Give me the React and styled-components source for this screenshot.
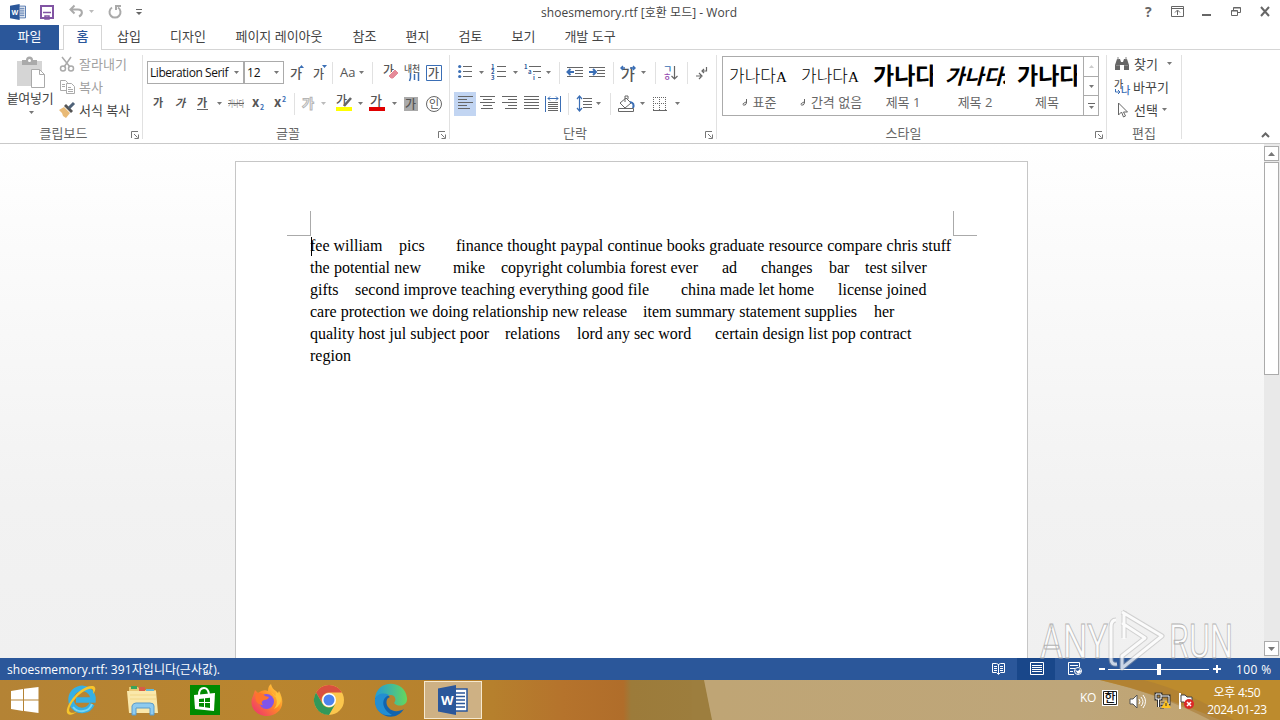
import React from "react";
import styled, { createGlobalStyle } from "styled-components";

const Global = createGlobalStyle`
  * { box-sizing: border-box; }
  html, body { margin: 0; padding: 0; }
  body { width: 1280px; height: 720px; overflow: hidden; background: #fff;
    font-family: "Open Sans", "Noto Sans CJK KR", sans-serif; font-size: 13px; color: #444; }
  svg { display: block; flex: none; overflow: visible; }
`;
const ui = '"Open Sans", "Noto Sans CJK KR", sans-serif';

const Screen = styled.div`width: 1280px; height: 720px; display: flex; flex-direction: column; position: relative; overflow: hidden;`;

/* title bar */
const TitleBar = styled.header`height: 25px; flex: none; display: grid; grid-template-columns: 541px 196px 1fr; align-items: center; background: #fff;`;
const QuickAccess = styled.div`display: flex; align-items: center; padding: 0 0 2px 9px; height: 23px;`;
const Title = styled.div`font-size: 12px; letter-spacing: .03px; white-space: nowrap; color: #444; height: 25px; line-height: 25px;`;
const WindowButtons = styled.div`display: flex; align-items: center; justify-content: flex-end; padding: 0 1px 2px 0; height: 23px;`;
const Slot = styled.div`width: ${p => p.$w}px; height: ${p => p.$h || 24}px; margin-left: ${p => p.$ml || 0}px; flex: none; display: flex; align-items: center; justify-content: center; background: ${p => p.$on ? "#c2d5f2" : "transparent"};`;

/* tabs */
const Tabs = styled.nav`height: 25px; flex: none; display: flex; border-bottom: 1px solid #d5d5d5;`;
const FileTab = styled.div`width: 59px; height: 25px; background: #2b579a; color: #fff; text-align: center; line-height: 23px; margin-right: 4px;`;
const Tab = styled.div`width: ${p => p.$w}px; text-align: center; line-height: 23px; height: 25px; white-space: nowrap; color: ${p => p.$active ? "#2b579a" : "#444"};
  ${p => p.$active && "border: 1px solid #d5d5d5; border-bottom: 0; background: #fff; line-height: 21px; font-weight: 500;"}`;

/* ribbon */
const Ribbon = styled.section`height: 94px; flex: none; display: flex; border-bottom: 1px solid #c9c9c9; background: #fff; position: relative;`;
const Group = styled.div`width: ${p => p.$w}px; height: 93px; flex: none; display: flex; flex-direction: column; position: relative;
  &::after { content: ""; position: absolute; right: 0; top: 5px; width: 1px; height: 84px; background: #e1e1e1; }`;
const GroupBody = styled.div`height: 75px; flex: none; padding: ${p => p.$p || "0"}; display: flex; flex-direction: ${p => p.$row ? "row" : "column"};`;
const GroupLabel = styled.div`height: 18px; line-height: 17px; text-align: center; color: #666; font-size: 13px; padding-right: ${p => p.$pr ?? 17}px;`;
const Launcher = styled.div`position: absolute; right: 4px; bottom: 4px;`;
const ToolRow = styled.div`height: 31px; display: flex; align-items: center;`;
const Divider = styled.div`width: 1px; height: 22px; background: #e1e1e1; margin: 0 ${p => p.$r || 0}px 0 ${p => p.$l || 0}px;`;
const Combo = styled.div`width: ${p => p.$w}px; height: 23px; margin-left: ${p => p.$ml || 0}px; border: 1px solid #ababab; display: flex; align-items: center; justify-content: space-between; padding: 0 4px 0 2px; color: #111; font: 12px/20px ${ui}; white-space: nowrap;`;
const ComboText = styled.span`overflow: hidden; width: ${p => p.$w}px; letter-spacing: ${p => p.$ls || 0}px;`;
const PasteButton = styled.div`width: 59px; display: flex; flex-direction: column; align-items: center; padding: 8px 0 0 3px; color: #444; white-space: nowrap;`;
const PasteText = styled.div`line-height: 16px; height: 17px; margin: 1px 2px 4px 0; letter-spacing: -.3px;`;
const CommandList = styled.div`display: flex; flex-direction: column; padding-top: ${p => p.$pt}px;`;
const Command = styled.div`height: 23px; display: flex; align-items: center; color: ${p => p.$dim ? "#a0a0a0" : "#444"}; white-space: nowrap; gap: ${p => p.$gap ?? 3}px;`;
const CommandText = styled.span`line-height: 20px; width: ${p => p.$w || "auto"};`;

const Gallery = styled.div`width: 377px; height: 60px; border: 1px solid #ababab; display: flex;`;
const StyleItem = styled.div`width: 72px; display: flex; flex-direction: column; align-items: center;`;
const Preview = styled.div`height: 38px; width: 60px; overflow: hidden; white-space: nowrap; color: #000; line-height: 40px; font-family: "Liberation Serif", "Noto Sans CJK KR", serif;
  font-size: ${p => p.$s}px; font-weight: ${p => p.$b ? 700 : 300}; font-style: ${p => p.$i ? "italic" : "normal"};`;
const SmallLatin = styled.span`font-size: 15px;`;
const StyleName = styled.div`height: 20px; line-height: 14px; color: #666; white-space: nowrap; display: flex; gap: 5px; align-items: flex-start;`;
const GalleryScroll = styled.div`width: 15px; margin-left: auto; display: flex; flex-direction: column; border-left: 1px solid #ababab;`;
const GalleryButton = styled.div`flex: 1; display: flex; align-items: center; justify-content: center; & + & { border-top: 1px solid #ababab; }`;
const Collapse = styled.div`margin-left: auto; align-self: flex-end; padding: 0 10px 5px 0;`;

/* document */
const Workspace = styled.main`height: 514px; flex: none; display: flex; background: linear-gradient(#fff 0, #fcfcfc 15%, #f2f2f2 70%, #f0f0f0);`;
const Canvas = styled.div`width: 1264px; height: 514px; padding: 17px 0 0 235px; overflow: hidden;`;
const Page = styled.article`width: 793px; height: 520px; background: #fff; border: 1px solid #c6c6c6; padding: 49px 50px 0 51px;`;
const Corners = styled.div`display: flex; justify-content: space-between; height: 25px;`;
const Corner = styled.div`width: 24px; height: 25px; border: 0 solid #aaa; border-bottom-width: 1px; ${p => p.$right ? "border-left-width: 1px;" : "border-right-width: 1px;"}`;
const Text = styled.div`margin-top: -1px; padding: 0 0 0 23px; font: 16px/22px "Liberation Serif", serif; color: #000;`;
const Line = styled.div`display: flex; height: 22px; position: relative;`;
const Segment = styled.span`width: ${p => p.$w}px; margin-left: ${p => p.$g}px; text-align-last: justify; white-space: nowrap; flex: none;`;
const Caret = styled.span`position: absolute; left: 1px; top: 2px; width: 1px; height: 19px; background: #000;`;
const Scrollbar = styled.div`width: 16px; background: #e9e9e9; padding: 2px 1px 2px 0; display: flex; flex-direction: column;`;
const ScrollButton = styled.div`height: 15px; background: #fff; border: 1px solid #ababab; display: flex; align-items: center; justify-content: center; margin-top: ${p => p.$auto ? "auto" : 0};`;
const Thumb = styled.div`height: 213px; margin-top: 1px; background: #fff; border: 1px solid #ababab;`;

/* status bar */
const StatusBar = styled.footer`height: 22px; flex: none; background: #2b579a; color: #fff; display: flex; align-items: center; font-size: 12px; padding-left: 7px;`;
const StatusText = styled.div`width: 972px; white-space: nowrap; letter-spacing: .08px;`;
const ViewButton = styled.div`width: 38px; height: 22px; padding: 0 0 2px 1px; display: flex; align-items: center; justify-content: center; background: ${p => p.$on ? "#19478a" : "transparent"};`;
const Slider = styled.div`width: 101px; height: 1px; background: #fff; display: flex; align-items: center; justify-content: center;`;
const Knob = styled.div`width: 4px; height: 11px; background: #fff;`;
const Zoom = styled.div`margin-left: 15px; letter-spacing: .4px; white-space: nowrap;`;

/* taskbar */
const Taskbar = styled.footer`height: 40px; flex: none; display: flex; align-items: stretch; color: #fff; position: relative;
  background: linear-gradient(90deg, #b48335 0, #b9852f 20%, #b6812d 38%, #b5732c 44%, #b06d2a 48.7%, #9c7b3a 49.3%, #9d7e3e 56%, #bfa575 56.1%, #bea67a 84%, #c3a36a 100%);`;
const Backdrop = styled.div`position: absolute; inset: 0;`;
const TaskItem = styled.div`width: ${p => p.$w || 62}px; position: relative; display: flex; align-items: center; justify-content: center; ${p => p.$on && "height: 38px; margin: 1px 0 0 2px; border: 1px solid #f6e9cf; background: #ceb184;"}`;
const Tray = styled.div`margin-left: auto; width: 200px; display: flex; align-items: center; position: relative;`;
const Ko = styled.div`width: 22px; font-size: 12px; letter-spacing: -.4px; padding-bottom: 5px;`;
const Ime = styled.div`margin-bottom: 4px;`;
const Clock = styled.div`width: 70px; margin-left: auto; margin-right: 8px; text-align: center; font-size: 12px; line-height: 17px; padding-top: 2px; white-space: nowrap; letter-spacing: -.3px;`;
const Watermark = styled.div`position: absolute; left: 1036px; top: 606px;`;

const Arrow = ({ c = "#777" }) => <svg width="5" height="3"><path d="M0 0h5L2.5 3z" fill={c} /></svg>;
const Svg = ({ w = 16, h = 16, children }) => <svg width={w} height={h} viewBox={`0 0 ${w} ${h}`} fill="none" stroke="#666" strokeWidth="1">{children}</svg>;
const Ga = ({ x = 0, y = 13, s = 13, c = "#555", w = 500, i, children = "가" }) =>
  <text x={x} y={y} fontSize={s} fill={c} stroke="none" fontWeight={w} fontStyle={i ? "italic" : "normal"} fontFamily="Noto Sans CJK KR, sans-serif">{children}</text>;
const LauncherIcon = () => <Svg w={8} h={8}><path d="M.5 7V.5H7M3 3l3.5 3.5M7.500 3.500v4h-4" stroke="#777" /></Svg>;

const WordLogo = ({ w, h }) => (
  <svg width={w} height={h} viewBox="0 0 30 30">
    <path d="M16 4h13v22H16z" fill="#fff" stroke="#2b579a" strokeWidth="1.5" />
    <path d="M18 8h9M18 11.500h9M18 15h9M18 18.500h9M18 22h9" stroke="#2b579a" strokeWidth="1.6" />
    <path d="M0 3.500 18 0v30L0 26.500z" fill="#2b579a" />
    <text x="3" y="20" fontSize="13" fontWeight="700" fill="#fff" fontFamily="Open Sans">W</text>
  </svg>
);
const Lines = ({ rows }) => <Svg w={15} h={13}><path d={rows.map(([a, b], i) => `M${a} ${i * 3 - .5}H${b}`).join("")} /></Svg>;

const Bullets = () => <Svg w={14} h={15}><path d="M5 1.500h9M5 6.500h9M5 11.500h9" /><g fill="#3a6eb5" stroke="none"><circle cx="1.700" cy="1.500" r="1.600" /><circle cx="1.700" cy="6.500" r="1.600" /><circle cx="1.700" cy="11.500" r="1.600" /></g></Svg>;
const Numbers = () => <Svg w={15} h={15}><path d="M6 1.500h9M6 6.500h9M6 11.500h9" />{[1, 2, 3].map(n => <Ga key={n} x={0} y={n * 5.2 - 1} s={6} c="#2b579a" w={700}>{n}</Ga>)}</Svg>;
const Multi = () => <Svg w={18} h={15}><path d="M5 1.500h12M9 6.500h8M14 12.500h3" /><Ga x={0} y={4} s={6} c="#2b579a" w={700}>1</Ga><Ga x={4} y={9} s={6} c="#2b579a" w={700}>a</Ga><Ga x={9} y={15} s={6} c="#2b579a" w={700}>i</Ga></Svg>;
const Indent = ({ right }) => <Svg w={16} h={12}><path d="M0 .5h16M8 3.500h8M8 6.500h8M0 9.500h16" /><path d={right ? "M0 5h6M4 2l3 3-3 3" : "M7 5H1M3.500 2l-3 3 3 3"} stroke="#3a6eb5" strokeWidth="2" /></Svg>;

const doc = [
  [[0, 72, "fee william"], [17, 25, "pics"], [32, 495, "finance thought paypal continue books graduate resource compare chris stuff"]],
  [[0, 111, "the potential new"], [32, 31, "mike"], [17, 197, "copyright columbia forest ever"], [24, 15, "ad"], [24, 51, "changes"], [17, 20, "bar"], [16, 61, "test silver"]],
  [[0, 30, "gifts"], [15, 294, "second improve teaching everything good file"], [32, 133, "china made let home"], [24, 88, "license joined"]],
  [[0, 317, "care protection we doing relationship new release"], [16, 214, "item summary statement supplies"], [17, 20, "her"]],
  [[0, 179, "quality host jul subject poor"], [16, 55, "relations"], [17, 114, "lord any sec word"], [24, 196, "certain design list pop contract"]],
  [[0, 40, "region"]],
];

function Clipboard() {
  return (
    <Group $w={143}>
      <GroupBody $row>
        <PasteButton>
          <Svg w={30} h={31}>
            <path d="M1 3h25v25H1z" fill="#d5d5d5" stroke="none" /><path d="M6 2h4a3.500 3.500 0 0 1 7 0h4v5H6z" fill="#aaa" stroke="none" /><circle cx="13.500" cy="2.500" r="1.500" fill="#fff" stroke="none" />
            <path d="M15.500 11.500h8l5 5v13h-13z" fill="#fff" stroke="#aaa" /><path d="M23.500 11.500v5h5" stroke="#aaa" />
          </Svg>
          <PasteText>붙여넣기</PasteText><Arrow />
        </PasteButton>
        <CommandList $pt={2}>
          <Command $dim $gap={4}><Svg w={16}><g stroke="#aaa" strokeWidth="1.500"><path d="M3 1l8 10M12 1L5 11" /><circle cx="4" cy="12.500" r="2.500" /><circle cx="12" cy="12.500" r="2.500" /></g></Svg><CommandText>잘라내기</CommandText></Command>
          <Command $dim $gap={4}><Svg w={16}><g stroke="#aaa"><path d="M1.500 1.500h5l2 2v8h-7zM3 5.500h3M3 7.500h3" /><path d="M7.500 4.500h5l3 3v7h-8zM9 8.500h3M9 10.500h5M9 12.500h5" fill="#fff" /></g></Svg><CommandText>복사</CommandText></Command>
          <Command $gap={4}><Svg w={16}><path d="M0 8l5-3 6 6-4 5-3-2-1-3z" fill="#e9ba76" stroke="none" /><path d="M5 4l2-2 7 7-2 2z" fill="#555" stroke="none" /><path d="M10 6l5-5" stroke="#4f6278" strokeWidth="3" /></Svg><CommandText>서식 복사</CommandText></Command>
        </CommandList>
      </GroupBody>
      <GroupLabel $pr={16}>클립보드</GroupLabel><Launcher><LauncherIcon /></Launcher>
    </Group>
  );
}

function FontGroup() {
  return (
    <Group $w={307}>
      <GroupBody $p="7px 0 0">
        <ToolRow>
          <Combo $w={97} $ml={4}><ComboText $w={83} $ls={-.45}>Liberation Serif</ComboText><Arrow /></Combo>
          <Combo $w={40}><ComboText $w={24}>12</ComboText><Arrow /></Combo>
          <Slot $w={24} $ml={1}><Svg w={14}><Ga s={13} y={13} /><path d="M9 3l2.500-3L14 3z" fill="#3a6eb5" stroke="none" /></Svg></Slot>
          <Slot $w={21}><Svg w={14}><Ga s={12} y={14} /><path d="M9 0h5l-2.500 3z" fill="#3a6eb5" stroke="none" /></Svg></Slot>
          <Divider $l={2} $r={6} />
          <Slot $w={18}><Svg w={17}><text x="0" y="12" fontSize="13" fill="#555" stroke="none" fontFamily="Open Sans">Aa</text></Svg></Slot><Slot $w={9}><Arrow /></Slot>
          <Divider $l={6} $r={8} />
          <Slot $w={20}><Svg w={17}><Ga s={12} y={10} /><path d="M5 11l7-7 4 4-6 6H8z" fill="#e58a98" stroke="#fff" /></Svg></Slot>
          <Slot $w={22}><Svg w={16}><Ga s={8.800} y={7} w={500}>내천</Ga><path d="M6.500 8v5l-1 3M10.500 9v6M14.500 8v8" stroke="#3a6eb5" strokeWidth="1.500" /></Svg></Slot>
          <Slot $w={22}><Svg w={16}><path d="M.5.5h15v15H.5z" stroke="#3a6eb5" /><Ga x={2} s={12} y={12.500} /></Svg></Slot>
        </ToolRow>
        <ToolRow>
          <Slot $w={22} $ml={4}><Svg w={11} h={13}><Ga s={11} y={10} w={700} /></Svg></Slot>
          <Slot $w={22}><Svg w={11} h={13}><Ga s={11} y={10} w={700} i /></Svg></Slot>
          <Slot $w={22}><Svg w={11} h={13}><Ga s={11} y={10} w={700} /><path d="M0 12.500h11" /></Svg></Slot>
          <Slot $w={12}><Arrow /></Slot>
          <Slot $w={23} $ml={-1}><Svg w={16} h={13}><text x="0" y="10" textLength="16" lengthAdjust="spacingAndGlyphs" fontSize="9" fill="#777" stroke="none" fontFamily="Noto Sans CJK KR">가나다</text><path d="M0 6.500h16" /></Svg></Slot>
          <Slot $w={22}><Svg w={13} h={13}><Ga y={10} s={13} w={700}>x</Ga><Ga x={8} y={13} s={7} c="#3a6eb5" w={700}>2</Ga></Svg></Slot>
          <Slot $w={22}><Svg w={13} h={13}><Ga y={10} s={13} w={700}>x</Ga><Ga x={8} y={5} s={7} c="#3a6eb5" w={700}>2</Ga></Svg></Slot>
          <Divider $l={3} $r={5} />
          <Slot $w={18}><Svg w={14}><text x="0" y="12" fontSize="13" fill="#fff" stroke="#b5b5b5" fontWeight="700" fontFamily="Noto Sans CJK KR">가</text></Svg></Slot><Slot $w={10}><Arrow c="#bbb" /></Slot>
          <Slot $w={22} $ml={5}><Svg w={16}><Ga y={9} s={12} /><path d="M8 10l7-8" strokeWidth="2.500" /><path d="M0 11h16v4H0z" fill="#ff0" stroke="none" /></Svg></Slot><Slot $w={10}><Arrow /></Slot>
          <Slot $w={24}><Svg w={16}><Ga x={1} y={9} s={13} /><path d="M0 11h16v4H0z" fill="#e00000" stroke="none" /></Svg></Slot><Slot $w={10}><Arrow /></Slot>
          <Slot $w={24}><Svg w={14} h={14}><path d="M0 0h14v14H0z" fill="#aaa" stroke="none" /><Ga x={1} y={12} s={12} /></Svg></Slot>
          <Slot $w={22}><Svg w={16}><circle cx="8" cy="8" r="7.500" /><Ga x={3} y={12} s={11} w={400}>인</Ga></Svg></Slot>
        </ToolRow>
      </GroupBody>
      <GroupLabel>글꼴</GroupLabel><Launcher><LauncherIcon /></Launcher>
    </Group>
  );
}

function Paragraph() {
  return (
    <Group $w={267}>
      <GroupBody $p="7px 0 0">
        <ToolRow>
          <Slot $w={22} $ml={4}><Bullets /></Slot><Slot $w={10}><Arrow /></Slot>
          <Slot $w={24}><Numbers /></Slot><Slot $w={10}><Arrow /></Slot>
          <Slot $w={25}><Multi /></Slot><Slot $w={6}><Arrow /></Slot>
          <Divider $l={8} $r={4} />
          <Slot $w={22}><Indent /></Slot><Slot $w={22}><Indent right /></Slot>
          <Divider $l={5} $r={3} />
          <Slot $w={22}><Svg w={16}><Ga x={1} y={15} s={15} /><path d="M1 3h4M3 1L1 3l2 2M10 3h5M13 1l2 2-2 2" stroke="#3a6eb5" strokeWidth="1.400" /></Svg></Slot><Slot $w={9}><Arrow /></Slot>
          <Divider $l={7} $r={2} />
          <Slot $w={24}><Svg w={15}><Ga y={8} s={10} c="#3a6eb5">ㄱ</Ga><Ga y={15} s={9} c="#954bb0">ㅎ</Ga><path d="M11.500 1v13M8.500 11l3 3 3-3" strokeWidth="1.200" /></Svg></Slot>
          <Divider $l={5} $r={2} />
          <Slot $w={24}><Svg w={12} h={14}><path d="M10.500 1v4H6m2-2L6 5l2 2M0 10h5M3 7l3 3-3 3" strokeWidth="1.200" /></Svg></Slot>
        </ToolRow>
        <ToolRow>
          <Slot $w={22} $ml={4} $on><Lines rows={[[0, 15], [0, 9], [0, 15], [0, 9], [0, 12]]} /></Slot>
          <Slot $w={22}><Lines rows={[[0, 15], [3, 12], [0, 15], [3, 12], [1, 13]]} /></Slot>
          <Slot $w={22}><Lines rows={[[0, 15], [6, 15], [0, 15], [6, 15], [3, 15]]} /></Slot>
          <Slot $w={22}><Lines rows={[[0, 15], [0, 15], [0, 15], [0, 15], [0, 15]]} /></Slot>
          <Slot $w={22}><Svg w={16}><path d="M.5 0v16M15.500 0v16M3 2.500h10M5 .5l-2 2 2 2M11 .5l2 2-2 2" stroke="#3a6eb5" /><path d="M3 6.500h10M3 8.500h10M3 10.500h10M3 12.500h10M3 14.500h10" /></Svg></Slot>
          <Divider $l={4} $r={5} />
          <Slot $w={20}><Svg w={15}><path d="M6 2.500h9M6 5.500h9M6 8.500h9M6 11.500h9" /><path d="M2.500 0v15M0 3l2.500-3L5 3M0 12l2.500 3L5 12" stroke="#3a6eb5" strokeWidth="1.200" /></Svg></Slot><Slot $w={9}><Arrow /></Slot>
          <Divider $l={7} $r={5} />
          <Slot $w={21}><Svg w={17}><path d="M2 7l6-5 5 5-6 5zM7 6V0h3v3" /><path d="M12 6q5 1 3 6" stroke="#3a6eb5" strokeWidth="2" /><path d="M.5 12.500h15v3H.5z" fill="#fff" /></Svg></Slot><Slot $w={11}><Arrow /></Slot>
          <Slot $w={24}><Svg w={14} h={14}><path d="M.5 0v13M6.500 0v13M12.500 0v13M0 .5h13M0 6.500h13" strokeDasharray="1 1" /><path d="M0 13.500h14" /></Svg></Slot><Slot $w={10}><Arrow /></Slot>
        </ToolRow>
      </GroupBody>
      <GroupLabel>단락</GroupLabel><Launcher><LauncherIcon /></Launcher>
    </Group>
  );
}

const Mark = () => <Svg w={6} h={12}><path d="M4.500 4v4q-1 3-3 2T4 7" /></Svg>;
function Styles() {
  return (
    <Group $w={390}>
      <GroupBody $p="6px 0 0 5px">
        <Gallery>
          <StyleItem><Preview $s={17}>가나다<SmallLatin>A</SmallLatin></Preview><StyleName><Mark />표준</StyleName></StyleItem>
          <StyleItem><Preview $s={17}>가나다<SmallLatin>A</SmallLatin></Preview><StyleName><Mark />간격 없음</StyleName></StyleItem>
          <StyleItem><Preview $s={23} $b>가나다</Preview><StyleName>제목 1</StyleName></StyleItem>
          <StyleItem><Preview $s={21} $b $i>가나다.</Preview><StyleName>제목 2</StyleName></StyleItem>
          <StyleItem><Preview $s={23} $b>가나다</Preview><StyleName>제목</StyleName></StyleItem>
          <GalleryScroll>
            <GalleryButton><svg width="5" height="3"><path d="M0 3h5L2.500 0z" fill="#ccc" /></svg></GalleryButton>
            <GalleryButton><Arrow /></GalleryButton>
            <GalleryButton><Svg w={7} h={6}><path d="M0 .5h7" /><path d="M1 3h5L3.500 6z" fill="#777" stroke="none" /></Svg></GalleryButton>
          </GalleryScroll>
        </Gallery>
      </GroupBody>
      <GroupLabel>스타일</GroupLabel><Launcher><LauncherIcon /></Launcher>
    </Group>
  );
}

function Editing() {
  return (
    <Group $w={75}>
      <GroupBody $p="2px 0 0 7px">
        <Command $gap={4}><Svg w={16} h={14}><path d="M1 13V8l2-6h3l1 3h2l1-3h3l2 6v5h-5V8H6v5z" fill="#666" stroke="none" /><path d="M2 8.500h4M10 8.500h4M4 0v3M12 0v3" stroke="#888" /></Svg><CommandText $w="29px">찾기</CommandText><Arrow /></Command>
        <Command $gap={3}><Svg w={16}><Ga y={9} s={10} /><Ga x={7} y={15} s={10} c="#3a6eb5">나</Ga><path d="M1.500 10v3h4M4 11l2 2-2 2" stroke="#3a6eb5" /></Svg><CommandText>바꾸기</CommandText></Command>
        <Command $gap={4}><Svg w={16}><path d="M4.500 1v12l3-3 2 5 2-1-2-4h4z" fill="#fff" /></Svg><CommandText>선택</CommandText><Arrow /></Command>
      </GroupBody>
      <GroupLabel $pr={1}>편집</GroupLabel>
    </Group>
  );
}

const Win = () => <svg width="28" height="26" viewBox="0 0 28 26"><path d="M0 4l12-2v10.500H0zM13 1.800L27.500 0v12.500H13zM0 13.500h12V24L0 22zM13 13.500h14.500V26L13 24z" fill="#fff" /></svg>;
const IE = () => <svg width="32" height="32" viewBox="0 0 32 32"><path d="M27 20a11 11 0 1 1 1-4H11" fill="none" stroke="#36b0e5" strokeWidth="5.500" /><path d="M27 20a11 11 0 0 1-19 3" fill="none" stroke="#78d7f5" strokeWidth="2" /><path d="M3 30C-3 25 15 0 28 2c4 1 2 6 0 8 1-4 0-6-4-5C13 8 1 25 5 28c2 2 6 0 8-1-4 3-8 5-10 3z" fill="#f7c52b" /></svg>;
const Folder = () => <svg width="34" height="30" viewBox="0 0 34 30"><path d="M3 2h9l2 3h16v20H3z" fill="#e9c774" /><path d="M5 1h6v3H5z" fill="#38a45a" /><path d="M13 2h6v4h-6z" fill="#d85c45" /><path d="M20 4h8v4h-8z" fill="#67b8d5" /><path d="M1 6h29l2 22H3z" fill="#fae8ab" /><path d="M4 10h26M4 14h26" stroke="#f2d686" /><path d="M6 30V21q1-3 4-3h14q4 0 4 3v9h-4v-7H10v7z" fill="#8ecbef" stroke="#5b9bc9" /></svg>;
const Store = () => <svg width="30" height="30" viewBox="0 0 30 30"><path d="M0 0h30v30H0z" fill="#008a00" /><path d="M4 10l21-2-1 18-19-2z" fill="#fff" /><path d="M9 10q0-7 5-7 4 0 5 6" fill="none" stroke="#fff" strokeWidth="2" /><path d="M9 14l5-.6V17H9zM15 13.300l5-.6V17h-5zM9 18h5v4l-5-.6zM15 18h5v5l-5-.8z" fill="#008a00" /></svg>;
const Firefox = () => <svg width="32" height="32" viewBox="0 0 32 32"><defs><linearGradient id="ff" x1="1" y1="0" x2="0" y2="1"><stop stopColor="#ffe14a" /><stop offset=".45" stopColor="#ff8b25" /><stop offset="1" stopColor="#ed267b" /></linearGradient></defs><path d="M2 12L4 6l3 3q5-4 10-2 0-5 3-7 1 5 5 7l2 2 1-2c9 16-2 25-12 25C5 32-3 22 2 12z" fill="url(#ff)" /><circle cx="15.500" cy="17.500" r="7.500" fill="#8055ea" /><path d="M5 9q6-1 9 3l4 1q-1 3-5 3-4 2-1 5c-6 0-9-5-7-12z" fill="#ff742b" /><path d="M20 8q10 8 3 17 8-4 7-12-2-3-5-5 0 4-1 5z" fill="#ffc33a" /></svg>;
const Chrome = () => <svg width="30" height="30" viewBox="0 0 30 30"><circle cx="15" cy="15" r="15" fill="#fbc64d" /><path d="M2 7.500a15 15 0 0 1 26 0H15a7.500 7.500 0 0 0-6.500 11.200z" fill="#d9503f" /><path d="M2 7.500A15 15 0 0 0 15 30l6.500-11.200A7.500 7.500 0 0 1 8.500 18.700z" fill="#31985a" /><circle cx="15" cy="15" r="7" fill="#fff" /><circle cx="15" cy="15" r="5.500" fill="#4d83ed" /></svg>;
const Edge = () => <svg width="32" height="32" viewBox="0 0 32 32"><defs><linearGradient id="ed"><stop stopColor="#229bd9" /><stop offset="1" stopColor="#65d75c" /></linearGradient></defs><path d="M0 15C1-5 30-5 32 14c1 9-10 9-13 5 3-3 1-8-3-8-8 0-9 10-3 16C3 25-1 20 0 15z" fill="url(#ed)" /><path d="M0 15c3-6 11-6 15-2-4 1-5 7-1 11 3 4 10 4 15 1-9 14-29 8-29-10z" fill="#1264ae" /><path d="M0 15c2-5 8-7 14-4-8 3-8 14 3 20C7 33-1 26 0 15z" fill="#238ed2" /></svg>;

export default function App() {
  return (
    <><Global /><Screen>
      <TitleBar>
        <QuickAccess>
          <Slot $w={18}><WordLogo w={16} h={16} /></Slot>
          <Slot $w={20} $ml={10}><Svg w={14} h={14}><path d="M1 1h12v12H1z" stroke="#8154a3" strokeWidth="2" /><path d="M3 7.500h8M5 11v3h4v-3z" stroke="#8154a3" strokeWidth="1.500" /></Svg></Slot>
          <Slot $w={16} $ml={11}><Svg w={15} h={13}><path d="M2 4.500h7c5 0 5 5 1 7M5.500.5l-4 4 4 4" stroke="#aaa" strokeWidth="2" /></Svg></Slot>
          <Slot $w={14}><Arrow c="#bbb" /></Slot>
          <Slot $w={16} $ml={9}><Svg w={14} h={14}><path d="M4 2.500a5.500 5.500 0 1 0 6 0M8 5V1h5" stroke="#aaa" strokeWidth="2" /></Svg></Slot>
          <Slot $w={14} $ml={9}><Svg w={6} h={6}><path d="M0 .5h6" /><path d="M0 3h6L3 6z" fill="#666" stroke="none" /></Svg></Slot>
        </QuickAccess>
        <Title>shoesmemory.rtf [호환 모드] - Word</Title>
        <WindowButtons>
          <Slot $w={29}><Svg w={8} h={12}><text x="1" y="11" fontSize="14" fontWeight="700" fill="#666" stroke="none" fontFamily="Open Sans">?</text></Svg></Slot>
          <Slot $w={29}><Svg w={13} h={11}><path d="M1.500.5h12v10h-12zM1.500 2.500h12M7.500 9V4.500M5 6.500l2.500-2.500L10 6.500" /></Svg></Slot>
          <Slot $w={29}><Svg w={9} h={8}><path d="M1 7h9" strokeWidth="2" /></Svg></Slot>
          <Slot $w={30}><Svg w={10} h={9}><path d="M3.500 3V.5h7v5H8M3.500 1h7M1.500 3.500h6v5h-6zM1.500 4h6" /></Svg></Slot>
          <Slot $w={29}><Svg w={10} h={9}><path d="M1 0l8 9M9 0L1 9" strokeWidth="2" /></Svg></Slot>
        </WindowButtons>
      </TitleBar>
      <Tabs><FileTab>파일</FileTab><Tab $w={39} $active>홈</Tab><Tab $w={54}>삽입</Tab><Tab $w={64}>디자인</Tab><Tab $w={118}>페이지 레이아웃</Tab><Tab $w={53}>참조</Tab><Tab $w={53}>편지</Tab><Tab $w={53}>검토</Tab><Tab $w={53}>보기</Tab><Tab $w={80}>개발 도구</Tab></Tabs>
      <Ribbon><Clipboard /><FontGroup /><Paragraph /><Styles /><Editing /><Collapse><Svg w={9} h={6}><path d="M1 5l3.500-3.500L8 5" strokeWidth="2" /></Svg></Collapse></Ribbon>
      <Workspace>
        <Canvas><Page>
          <Corners><Corner /><Corner $right /></Corners>
          <Text>{doc.map((l, i) => <Line key={i}>{i === 0 && <Caret />}{l.map(([g, w, t]) => <Segment key={t} $g={g} $w={w}>{t}</Segment>)}</Line>)}</Text>
        </Page></Canvas>
        <Scrollbar>
          <ScrollButton><svg width="7" height="4"><path d="M0 4h7L3.500 0z" fill="#777" /></svg></ScrollButton><Thumb />
          <ScrollButton $auto><svg width="7" height="4"><path d="M0 0h7L3.500 4z" fill="#777" /></svg></ScrollButton>
        </Scrollbar>
      </Workspace>
      <StatusBar>
        <StatusText>shoesmemory.rtf: 391자입니다(근사값).</StatusText>
        <ViewButton><Svg w={13} h={13}><g stroke="#fff"><path d="M.5 1.500h4l2 1 2-1h4v9h-4l-2 2-2-2h-4zM6.500 2v10M2 4.500h3M2 6.500h3M2 8.500h3M8 4.500h3M8 6.500h3M8 8.500h3" /></g></Svg></ViewButton>
        <ViewButton $on><Svg w={14} h={13}><path d="M.5.5h13v12H.5zM2 3.500h10M2 5.500h10M2 7.500h10M2 9.500h10" stroke="#fff" /></Svg></ViewButton>
        <ViewButton><Svg w={14} h={13}><path d="M6 12.500H.5V.5h11V5M2 3.500h8M2 6.500h5M2 9.500h3" stroke="#fff" /><circle cx="10" cy="9" r="3.500" stroke="#fff" /><path d="M7 8l3 1 2-2 1 3-3 2z" fill="#fff" stroke="none" /></Svg></ViewButton>
        <Slot $w={7} $ml={5}><Svg w={6} h={6}><path d="M0 3h6" stroke="#fff" strokeWidth="2" /></Svg></Slot>
        <Slot $w={3} /><Slider><Knob /></Slider>
        <Slot $w={8} $ml={4}><Svg w={8} h={8}><path d="M0 4h8M4 0v8" stroke="#fff" strokeWidth="2" /></Svg></Slot>
        <Zoom>100 %</Zoom>
      </StatusBar>
      <Taskbar>
        <Backdrop><svg width="1280" height="40"><path d="M703 0l9 40h-20V0z" fill="#9d7e3e" /><path d="M712 40L704 0h16v40z" fill="#bfa575" /><path d="M1100 0Q1160 14 1220 40H1280V0z" fill="#bd8b2d" /><path d="M1100 0Q1160 14 1210 40h24Q1190 12 1144 0z" fill="#aa7d35" opacity=".6" /></svg></Backdrop>
        <TaskItem $w={50}><Win /></TaskItem><TaskItem><IE /></TaskItem><TaskItem><Folder /></TaskItem><TaskItem><Store /></TaskItem><TaskItem><Firefox /></TaskItem><TaskItem><Chrome /></TaskItem><TaskItem><Edge /></TaskItem><TaskItem $w={58} $on><WordLogo w={30} h={30} /></TaskItem>
        <Tray>
          <Ko>KO</Ko><Ime><Svg w={16}><path d="M0 0h16v16H0z" fill="#fff" stroke="none" /><path d="M1.500 1.500h13v13h-13z" stroke="#222" /><Ga x={2.500} y={12.300} s={12} c="#111">한</Ga></Svg></Ime>
          <Slot $w={16} $ml={12}><Svg w={16}><path d="M0 7h3l4-4v13l-4-4H0z" fill="#fff" stroke="#555" /><path d="M9 7q2 3 0 5M11 5q4 5 0 9M13 3q5 6 0 13" stroke="#fff" /></Svg></Slot>
          <Slot $w={18} $ml={8}><Svg w={16}><path d="M1 2h5v5H1zM3.500 7v8M6 4h8v8H6M5 15h4" stroke="#333" strokeWidth="3" /><path d="M1 2h5v5H1zM3.500 7v8M6 4h8v8H6M5 15h4" stroke="#fff" /><path d="M11 8l5 8H6z" fill="#ffc31f" stroke="none" /><path d="M11 11v3" stroke="#333" /></Svg></Slot>
          <Slot $w={16} $ml={6}><Svg w={16}><path d="M2 1v16" stroke="#fff" strokeWidth="2" /><path d="M3 3h4l2 2h5v7H8l-2-2H3z" fill="#fff" stroke="#444" /><circle cx="11" cy="12" r="5" fill="#dc2828" stroke="none" /><path d="M9 10l4 4M13 10l-4 4" stroke="#fff" strokeWidth="1.500" /></Svg></Slot>
          <Clock>오후 4:50<br />2024-01-23</Clock>
        </Tray>
      </Taskbar>
      <Watermark>
        <svg width="204" height="68" viewBox="0 0 204 68" fontFamily="Roboto, sans-serif" fontSize="48" fontWeight="400">
          <g fill="#fff" stroke="#a5a5a5" strokeWidth=".9" opacity=".8"><text x="4" y="52" textLength="68" lengthAdjust="spacingAndGlyphs">ANY</text><text x="133" y="52" textLength="64" lengthAdjust="spacingAndGlyphs">RUN</text></g>
          <g fill="none" strokeLinejoin="round" opacity=".75"><path d="M88 5v27M86 6l40 24-40 32V50l23-18-23-15M80 14q-5 0-5 7v32q0 6 6 5" stroke="#aaa" strokeWidth="5" opacity=".6" /><path d="M88 7v26M86 6l40 24-40 32V50l23-18-23-15M80 14q-5 0-5 7v32q0 6 6 5" stroke="#fff" strokeWidth="3" /></g>
        </svg>
      </Watermark>
    </Screen></>
  );
}
